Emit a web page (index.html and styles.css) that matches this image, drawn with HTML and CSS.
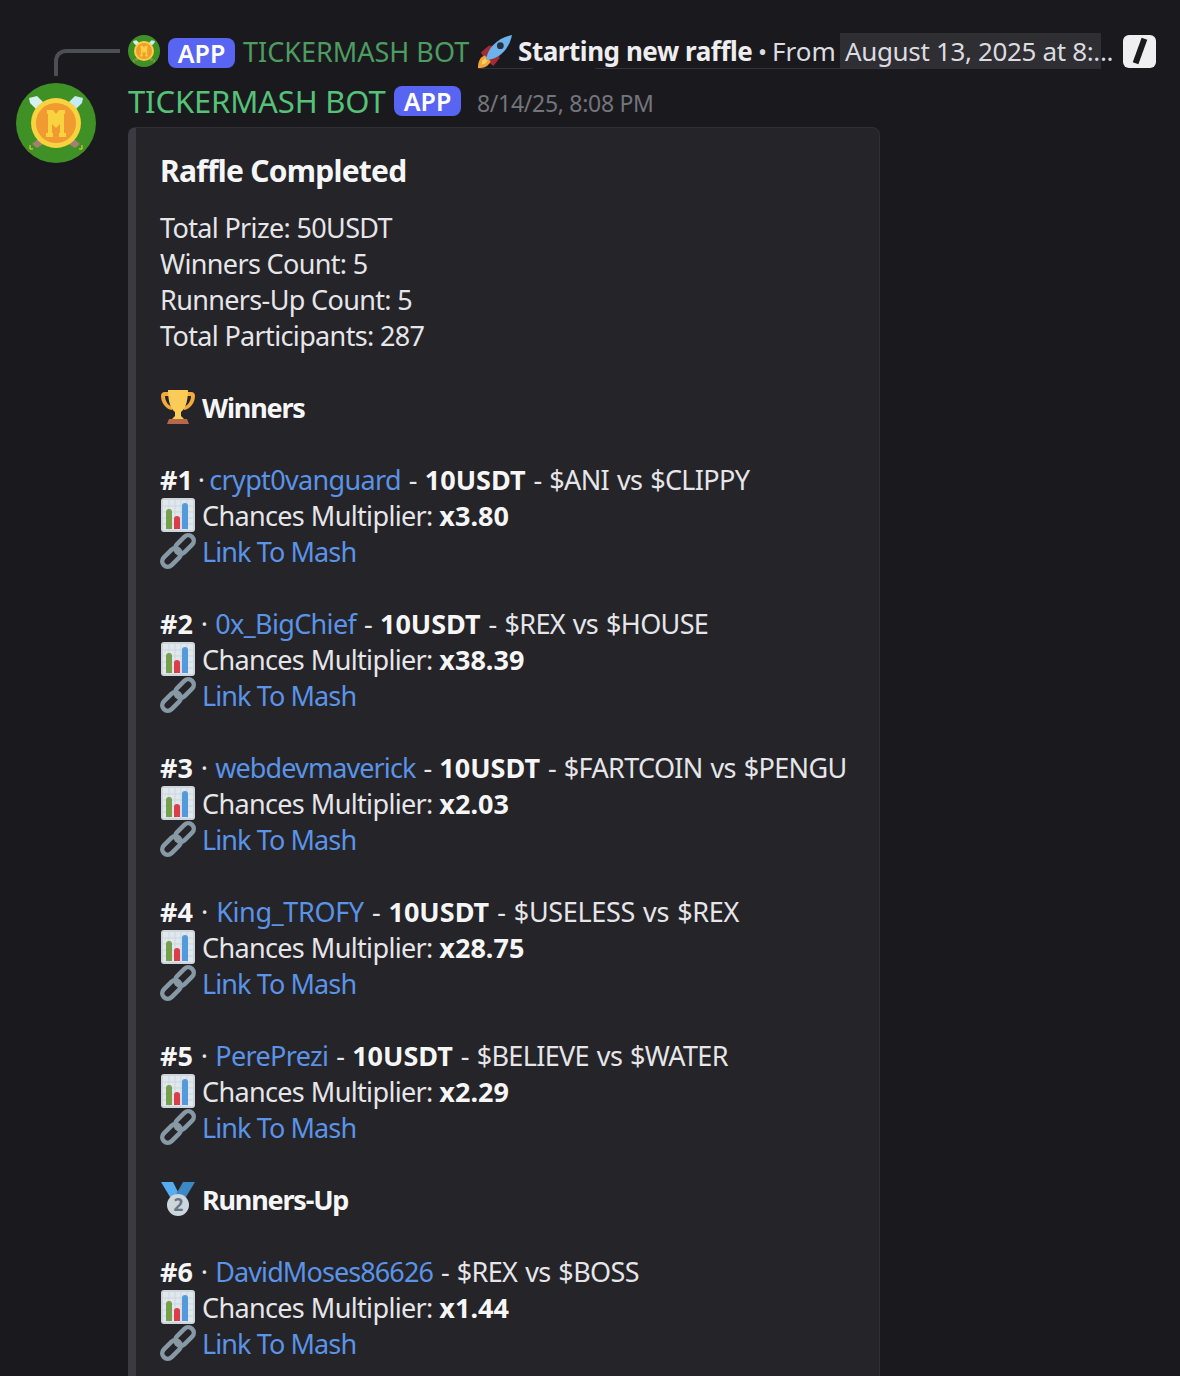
FILE: index.html
```html
<!DOCTYPE html>
<html lang="en">
<head>
<meta charset="utf-8">
<title>Raffle Completed</title>
<link rel="stylesheet" href="styles.css">
</head>
<body>
<svg class="defs" width="0" height="0" aria-hidden="true">
  <defs>
    <symbol id="avatar" viewBox="0 0 80 80">
      <circle cx="40" cy="40" r="40" fill="#3f9126"/>
      <path d="M13 15l8-2 9 9-7 7-9-9z" fill="#d6f0ee"/>
      <path d="M67 15l-8-2-9 9 7 7 9-9z" fill="#c4ecf2"/>
      <path d="M22 56l5 5-6 4-5-4z" fill="#a3806f"/>
      <path d="M58 56l-5 5 6 4 5-4z" fill="#a3806f"/>
      <path d="M14 62v4h3M66 62v4h-3" fill="none" stroke="#f8d23f" stroke-width="1"/>
      <circle cx="40" cy="40" r="25" fill="#f8d23f"/>
      <circle cx="40" cy="40" r="20" fill="#f29a32"/>
      <path d="M30 50h2V31h-1v-4h6l3 4 3-4h6v4h-1v19h2v4h-7v-4h1v-9l-4 4-4-4v9h1v4h-7z" fill="#f8d23f"/>
    </symbol>
    <symbol id="chart" viewBox="0 0 36 36">
      <rect x="1" y="1" width="34" height="34" rx="3" fill="#ccd6dd"/>
      <path d="M3 3h30v30H3z" fill="#e1e8ed"/>
      <path d="M3 9h30M3 15h30M3 21h30M3 27h30M9 3v30M15 3v30M21 3v30M27 3v30" stroke="#ccd6dd" stroke-width="1"/>
      <path d="M6 32V15a3 3 0 0 1 6 0v17z" fill="#77a04a"/>
      <path d="M14 32V22a3 3 0 0 1 6 0v10z" fill="#dd3d48"/>
      <path d="M22 32V9a3 3 0 0 1 6 0v23z" fill="#5599dd"/>
    </symbol>
    <symbol id="link" viewBox="0 0 36 36">
      <g fill="none" stroke="#8899a6" stroke-width="4.5">
        <rect x="13.7" y="6" width="21.6" height="11" rx="5.5" transform="rotate(-45 24.5 11.5)"/>
        <rect x="0.7" y="19" width="21.6" height="11" rx="5.5" transform="rotate(-45 11.5 24.5)"/>
      </g>
    </symbol>
  </defs>
</svg>

<main class="message">
  <div class="reply">
    <span class="connector"></span>
    <svg class="reply-avatar"><use href="#avatar"/></svg>
    <span class="badge reply-badge">APP</span>
    <span class="reply-name">TICKERMASH BOT</span>
    <svg class="rocket" viewBox="0 0 36 36">
      <path d="M4 19l8-7h7L9 27z" fill="#a02c34"/>
      <path d="M17 33l6-8v-8L9 27z" fill="#a02c34"/>
      <path d="M1 35c0-7 2-11 7-13l6 6c-2 5-6 7-13 7z" fill="#f4a33b"/>
      <path d="M5 31c0-3 1-5 4-6l2 2c-1 3-3 4-6 4z" fill="#fbd25a"/>
      <path d="M9 27C11 14 21 4 36 1c-3 15-13 25-27 26z" fill="#6db2ea"/>
      <circle cx="24" cy="12" r="3.5" fill="#24323d"/>
    </svg>
    <strong class="reply-title">Starting new raffle</strong>
    <span class="reply-sep">•</span>
    <span class="reply-from">From</span>
    <span class="reply-chip">August 13, 2025 at 8:...</span>
    <span class="slash-icon"><span class="slash"></span></span>
  </div>

  <div class="body">
    <svg class="avatar"><use href="#avatar"/></svg>
    <div class="content">
      <div class="header">
        <span class="name">TICKERMASH BOT</span>
        <span class="badge">APP</span>
        <time class="time">8/14/25, 8:08 PM</time>
      </div>

      <article class="embed">
        <h1 class="embed-title">Raffle Completed</h1>
        <div class="group">
          <div class="line">Total Prize: 50USDT</div>
          <div class="line">Winners Count: 5</div>
          <div class="line">Runners-Up Count: 5</div>
          <div class="line">Total Participants: 287</div>
        </div>

        <div class="line heading">
          <svg class="emoji" viewBox="0 0 36 36">
            <path d="M5 3h26c3 0 4 2 4 4 0 7-5 13-11 14l-1-3c4-1 8-5 8-11H5c0 6 4 10 8 11l-1 3C6 20 1 14 1 7c0-2 1-4 4-4z" fill="#f4a93d"/>
            <path d="M8 1h20c0 12-3 19-7 22v4h-6v-4C11 20 8 13 8 1z" fill="#fbcb58"/>
            <path d="M15 27h6l3 3H12z" fill="#fbcb58"/>
            <path d="M9 30h18l2 5H7z" fill="#b4684c"/>
          </svg>
          <strong>Winners</strong>
        </div>

        <section class="group entry">
          <div class="line"><b>#1</b><span class="sep-tight"> · </span><a>crypt0vanguard</a> - <b>10USDT</b> - $ANI vs $CLIPPY</div>
          <div class="line multi"><svg class="emoji"><use href="#chart"/></svg>Chances Multiplier: <b>x3.80</b></div>
          <div class="line"><svg class="emoji"><use href="#link"/></svg><a class="mash">Link To Mash</a></div>
        </section>
        <section class="group entry">
          <div class="line"><b>#2</b> · <a>0x_BigChief</a> - <b>10USDT</b> - $REX vs $HOUSE</div>
          <div class="line multi"><svg class="emoji"><use href="#chart"/></svg>Chances Multiplier: <b>x38.39</b></div>
          <div class="line"><svg class="emoji"><use href="#link"/></svg><a class="mash">Link To Mash</a></div>
        </section>
        <section class="group entry">
          <div class="line"><b>#3</b> · <a class="tight">webdevmaverick</a> - <b>10USDT</b> - $FARTCOIN vs $PENGU</div>
          <div class="line multi"><svg class="emoji"><use href="#chart"/></svg>Chances Multiplier: <b>x2.03</b></div>
          <div class="line"><svg class="emoji"><use href="#link"/></svg><a class="mash">Link To Mash</a></div>
        </section>
        <section class="group entry">
          <div class="line wide"><b>#4</b> · <a>King_TROFY</a> - <b>10USDT</b> - $USELESS vs $REX</div>
          <div class="line multi"><svg class="emoji"><use href="#chart"/></svg>Chances Multiplier: <b>x28.75</b></div>
          <div class="line"><svg class="emoji"><use href="#link"/></svg><a class="mash">Link To Mash</a></div>
        </section>
        <section class="group entry">
          <div class="line"><b>#5</b> · <a>PerePrezi</a> - <b>10USDT</b> - $BELIEVE vs $WATER</div>
          <div class="line multi"><svg class="emoji"><use href="#chart"/></svg>Chances Multiplier: <b>x2.29</b></div>
          <div class="line"><svg class="emoji"><use href="#link"/></svg><a class="mash">Link To Mash</a></div>
        </section>

        <div class="line heading">
          <svg class="emoji" viewBox="0 0 36 36">
            <path d="M1 1h12l7 14-7 6z" fill="#55acee"/>
            <path d="M35 1H23L14 17l9 4z" fill="#3b88c3"/>
            <circle cx="18" cy="24" r="11" fill="#ccd6dd"/>
            <text class="medal-num" x="18" y="30" text-anchor="middle">2</text>
          </svg>
          <strong>Runners-Up</strong>
        </div>

        <section class="group entry">
          <div class="line"><b>#6</b> · <a class="tight">DavidMoses86626</a> - $REX vs $BOSS</div>
          <div class="line multi"><svg class="emoji"><use href="#chart"/></svg>Chances Multiplier: <b>x1.44</b></div>
          <div class="line"><svg class="emoji"><use href="#link"/></svg><a class="mash">Link To Mash</a></div>
        </section>
      </article>
    </div>
  </div>
</main>
</body>
</html>
```

FILE: styles.css
```css
* { box-sizing: border-box; }
html, body { margin: 0; height: 1376px; overflow: hidden; }
body {
  background: #1a1a1e;
  color: #eeeef0;
  font-family: "Noto Sans", "Open Sans", sans-serif;
  font-size: 27px;
}
.defs { position: absolute; }
.message { padding-top: 33px; }

.reply {
  position: relative;
  display: flex;
  align-items: center;
  height: 36px;
  padding-left: 128px;
  white-space: nowrap;
}
.reply::after {
  content: "";
  position: absolute;
  left: 478px;
  top: 35px;
  width: 437px;
  height: 1px;
  background: linear-gradient(90deg, #333339 0 55px, transparent 55px 117px, #333339 117px);
}
.connector {
  position: absolute;
  left: 54px;
  top: 16px;
  width: 66px;
  height: 27px;
  border-left: 4px solid #4e4e55;
  border-top: 4px solid #4e4e55;
  border-top-left-radius: 12px;
}
.reply-avatar { width: 32px; height: 32px; margin-right: 8px; flex: none; }
.badge {
  display: inline-flex;
  align-items: center;
  justify-content: center;
  width: 67px;
  height: 30px;
  border-radius: 8px;
  background: #5865f2;
  color: #fff;
  font-size: 25px;
  font-weight: 600;
  flex: none;
}
.reply-badge { margin-top: 4px; }
.reply-name { margin-left: 8px; color: #4d9c60; font-size: 27px; width: 226px; }
.rocket { width: 35px; height: 35px; margin-left: 8px; flex: none; }
.reply-title { margin-left: 6px; font-size: 26px; font-weight: 700; width: 235px; letter-spacing: -0.45px; }
.reply-sep { margin-left: 5px; width: 14px; color: #dcdce0; font-size: 24px; }
.reply-from { width: 68px; font-size: 26px; color: #dcdce0; }
.reply-chip {
  background: #2e2e33;
  color: #dcdce0;
  height: 36px;
  line-height: 36px;
  width: 261px;
  padding-left: 5px;
  font-size: 26px;
  letter-spacing: -0.35px;
}
.slash-icon {
  display: flex;
  align-items: center;
  justify-content: center;
  width: 33px;
  height: 33px;
  margin-left: 22px;
  border-radius: 6px;
  background: #efeff1;
  flex: none;
}
.slash {
  width: 6px;
  height: 26px;
  background: #1a1a1e;
  transform: rotate(20deg);
}

.body { display: flex; margin-top: 14px; padding-left: 16px; }
.avatar { width: 80px; height: 80px; flex: none; margin-right: 32px; }
.content { width: 752px; }
.header { display: flex; align-items: center; height: 36px; white-space: nowrap; }
.name { color: #56c278; font-size: 31px; width: 258px; letter-spacing: -0.15px; }
.header .badge { margin-left: 8px; }
.time { margin: 4px 0 0 16px; color: #74747c; font-size: 23px; letter-spacing: -0.3px; }

.embed {
  margin-top: 8px;
  padding: 23px 24px 0 24px;
  background: #242429;
  border: 1px solid #303036;
  border-left: 8px solid #3a3a40;
  border-radius: 8px 8px 0 0;
  display: flex;
  flex-direction: column;
  gap: 36px;
  height: 1400px;
}
.embed-title {
  margin: 0 0 -18px;
  font-size: 30px;
  line-height: 40px;
  font-weight: 700;
  letter-spacing: -0.75px;
  color: #f6f6f7;
}
.group { display: flex; flex-direction: column; }
.line {
  display: flex;
  align-items: center;
  height: 36px;
  white-space: pre;
  color: #e6e6e9;
  letter-spacing: -0.65px;
}
.entry .line { word-spacing: 1.5px; }
.entry .wide { letter-spacing: -0.35px; }
.entry .multi { word-spacing: 0.3px; }
.line b { color: #f6f6f7; font-weight: 700; letter-spacing: 0; }
.line .sep-tight { word-spacing: -1.5px; }
.heading strong { color: #f6f6f7; font-weight: 700; letter-spacing: -1.2px; }
.line a { color: #5b93e6; }
.line .tight { letter-spacing: -0.9px; }
.line .mash { letter-spacing: -0.9px; word-spacing: 0; }
.emoji { width: 36px; height: 36px; margin-right: 6px; flex: none; }
.medal-num { font: 700 17px "Noto Sans", sans-serif; fill: #66757f; }
```
